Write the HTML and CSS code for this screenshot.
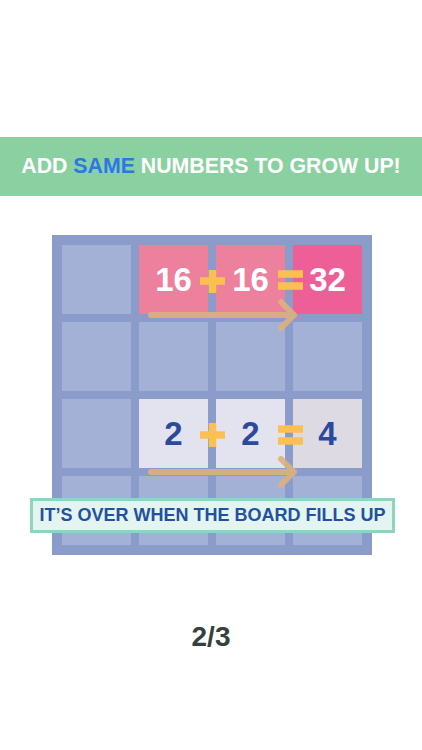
FILE: index.html
```html
<!DOCTYPE html>
<html lang="en">
<head>
    <meta charset="UTF-8">
    <meta name="viewport" content="width=device-width, initial-scale=1.0">
    <title>How to play</title>
    <link rel="stylesheet" href="styles.css">
</head>
<body>
    <div class="banner">
        <p>ADD <span class="accent">SAME</span> NUMBERS TO GROW UP!</p>
    </div>

    <div class="board-wrap">
        <div class="board">
            <div class="cell"></div>
            <div class="cell tile pink">16</div>
            <div class="cell tile pink">16</div>
            <div class="cell tile hot">32</div>

            <div class="cell"></div>
            <div class="cell"></div>
            <div class="cell"></div>
            <div class="cell"></div>

            <div class="cell"></div>
            <div class="cell tile light">2</div>
            <div class="cell tile light">2</div>
            <div class="cell tile grey">4</div>

            <div class="cell"></div>
            <div class="cell"></div>
            <div class="cell"></div>
            <div class="cell"></div>
        </div>

        <!-- plus / equals signs and merge arrows drawn over the tiles -->
        <svg class="marks" width="320" height="320" viewBox="0 0 320 320">
            <g class="sign">
                <line x1="148" y1="46" x2="173" y2="46"/>
                <line x1="160.5" y1="35" x2="160.5" y2="58"/>
                <line x1="226" y1="39" x2="251" y2="39"/>
                <line x1="226" y1="51" x2="251" y2="51"/>

                <line x1="148" y1="200" x2="173" y2="200"/>
                <line x1="160.5" y1="188" x2="160.5" y2="212"/>
                <line x1="226" y1="194" x2="251" y2="194"/>
                <line x1="226" y1="206" x2="251" y2="206"/>
            </g>
            <g class="arrow">
                <line x1="99" y1="80" x2="241" y2="80"/>
                <polyline points="229,67 242,80 229,93"/>
                <line x1="99" y1="237" x2="241" y2="237"/>
                <polyline points="229,224 242,237 229,250"/>
            </g>
        </svg>

        <div class="hint">IT’S OVER WHEN THE BOARD FILLS UP</div>
    </div>

    <div class="page">2/3</div>
</body>
</html>
```

FILE: styles.css
```css
body {
    margin: 0;
    width: 422px;
    height: 750px;
    background-color: #fff;
    font-family: "Liberation Sans", Arial, sans-serif;
    font-weight: bold;
    overflow: hidden;
}
.banner {
    margin-top: 137px;
    height: 59px;
    background-color: #8bd0a0;
    display: flex;
    align-items: center;
    justify-content: center;
}
.banner p {
    margin: 0;
    color: #fff;
    font-size: 21.3px;
}
.accent {
    color: #2b78e4;
}
.board-wrap {
    position: relative;
    width: 320px;
    margin: 39px 0 0 52px;
}
.board {
    display: grid;
    grid-template-columns: repeat(4, 69px);
    grid-auto-rows: 69px;
    gap: 8px;
    padding: 10px;
    background-color: #8b9ccb;
}
.cell {
    background-color: #a3b1d7;
}
.tile {
    display: flex;
    align-items: center;
    justify-content: center;
    font-size: 33px;
}
.pink {
    background-color: #ec809d;
    color: #fff;
}
.hot {
    background-color: #ee5f98;
    color: #fff;
}
.light {
    background-color: #e3e2ef;
    color: #2b4a9b;
}
.grey {
    background-color: #dddae3;
    color: #2b4a9b;
}
.marks {
    position: absolute;
    left: 0;
    top: 0;
}
.sign line {
    stroke: #fcc050;
    stroke-width: 7.5;
}
.arrow {
    fill: none;
    stroke: #dcb27e;
    stroke-width: 6;
    stroke-linecap: round;
    stroke-linejoin: round;
    opacity: 0.9;
}
.hint {
    position: absolute;
    left: -22px;
    top: 263px;
    width: 359px;
    height: 29px;
    border: 3px solid #8ed4c0;
    background-color: #e4f4f0;
    color: #2350a0;
    font-size: 18px;
    display: flex;
    align-items: center;
    justify-content: center;
}
.page {
    margin-top: 66px;
    text-align: center;
    color: #36403f;
    font-size: 28px;
}
```
